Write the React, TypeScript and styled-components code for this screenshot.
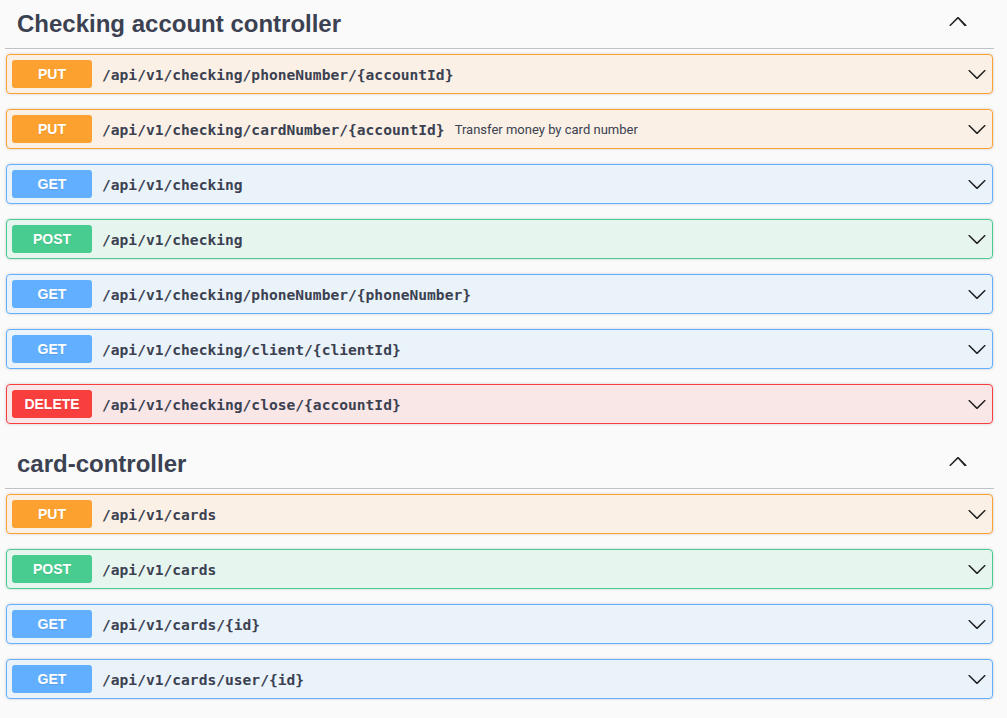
import React from "react";
import styled, { createGlobalStyle } from "styled-components";

const Global = createGlobalStyle`
  html, body { margin: 0; padding: 0; background: #fafafa; }
  body { font-family: "Liberation Sans", Arial, sans-serif; color: #3b4151; }
`;

type Method = "PUT" | "GET" | "POST" | "DELETE";

const COLORS: Record<Method, string> = {
  PUT: "#fca130",
  GET: "#61affe",
  POST: "#49cc90",
  DELETE: "#f93e3e",
};

const BG: Record<Method, string> = {
  PUT: "rgba(252,161,48,.1)",
  GET: "rgba(97,175,254,.1)",
  POST: "rgba(73,204,144,.1)",
  DELETE: "rgba(249,62,62,.1)",
};

const Page = styled.div`
  min-height: 718px;
  padding: 0 13px 0 5px;
  box-sizing: border-box;
  display: flex;
  flex-direction: column;
  gap: 16px;
`;

const Section = styled.section`
  display: flex;
  flex-direction: column;
`;

const TagHeader = styled.div`
  display: flex;
  align-items: center;
  padding: 10px 0 10px 12px;
  border-bottom: 1px solid rgba(59, 65, 81, 0.3);
  margin-bottom: 5px;
`;

const TagTitle = styled.h3`
  flex: 1;
  margin: 0;
  font-family: "Liberation Sans", Arial, sans-serif;
  font-size: 24px;
  line-height: 28px;
  font-weight: 700;
  color: #3b4151;
`;

const Toggle = styled.svg`
  width: 20px;
  height: 20px;
  margin-right: 26px;
  margin-top: -7px;
  fill: #1f1f1f;
`;

const Rows = styled.div`
  display: flex;
  flex-direction: column;
  gap: 15px;
`;

const Row = styled.div<{ $m: Method }>`
  display: flex;
  align-items: center;
  margin: 0 1px;
  padding: 5px;
  border: 1px solid ${(p) => COLORS[p.$m]};
  background: ${(p) => BG[p.$m]};
  border-radius: 4px;
  box-shadow: 0 0 3px rgba(0, 0, 0, 0.19);
`;

const Badge = styled.span<{ $m: Method }>`
  flex: none;
  width: 80px;
  height: 28px;
  display: flex;
  align-items: center;
  justify-content: center;
  border-radius: 3px;
  background: ${(p) => COLORS[p.$m]};
  color: #fff;
  font-family: "Liberation Sans", Arial, sans-serif;
  font-size: 14px;
  font-weight: 700;
  text-shadow: 0 1px 0 rgba(0, 0, 0, 0.1);
`;

const Path = styled.span`
  padding: 0 10px;
  font-family: "DejaVu Sans Mono", monospace;
  font-size: 14.6px;
  font-weight: 700;
  color: #3b4151;
`;

const Desc = styled.span`
  flex: 1;
  font-family: Roboto, "Liberation Sans", sans-serif;
  font-size: 13px;
  color: #3b4151;
`;

const Chevron = styled.svg`
  flex: none;
  width: 20px;
  height: 20px;
  margin-left: auto;
  fill: #1f1f1f;
`;

const DOWN =
  "M17.418 6.109c.272-.268.709-.268.979 0s.271.701 0 .969l-7.908 7.83c-.27.268-.707.268-.979 0l-7.908-7.830c-.27-.268-.27-.701 0-.969.271-.268.709-.268.979 0L10 13.25l7.418-7.141z";
const UP =
  "M17.418 14.908c-.272.268-.709.268-.979 0L10 7.665l-7.418 7.243c-.27.268-.707.268-.979 0-.27-.268-.27-.701 0-.969l7.908-7.83c.27-.268.707-.268.979 0l7.908 7.83c.272.268.272.701 0 .969z";

type Op = { m: Method; path: string; desc?: string };

const sections: { title: string; ops: Op[] }[] = [
  {
    title: "Checking account controller",
    ops: [
      { m: "PUT", path: "/api/v1/checking/phoneNumber/{accountId}" },
      { m: "PUT", path: "/api/v1/checking/cardNumber/{accountId}", desc: "Transfer money by card number" },
      { m: "GET", path: "/api/v1/checking" },
      { m: "POST", path: "/api/v1/checking" },
      { m: "GET", path: "/api/v1/checking/phoneNumber/{phoneNumber}" },
      { m: "GET", path: "/api/v1/checking/client/{clientId}" },
      { m: "DELETE", path: "/api/v1/checking/close/{accountId}" },
    ],
  },
  {
    title: "card-controller",
    ops: [
      { m: "PUT", path: "/api/v1/cards" },
      { m: "POST", path: "/api/v1/cards" },
      { m: "GET", path: "/api/v1/cards/{id}" },
      { m: "GET", path: "/api/v1/cards/user/{id}" },
    ],
  },
];

export default function App() {
  return (
    <>
      <Global />
      <Page>
        {sections.map((s) => (
          <Section key={s.title}>
            <TagHeader>
              <TagTitle>{s.title}</TagTitle>
              <Toggle viewBox="0 0 20 20">
                <path d={UP} />
              </Toggle>
            </TagHeader>
            <Rows>
              {s.ops.map((o, i) => (
                <Row key={i} $m={o.m}>
                  <Badge $m={o.m}>{o.m}</Badge>
                  <Path>{o.path}</Path>
                  <Desc>{o.desc}</Desc>
                  <Chevron viewBox="0 0 20 20">
                    <path d={DOWN} />
                  </Chevron>
                </Row>
              ))}
            </Rows>
          </Section>
        ))}
      </Page>
    </>
  );
}
